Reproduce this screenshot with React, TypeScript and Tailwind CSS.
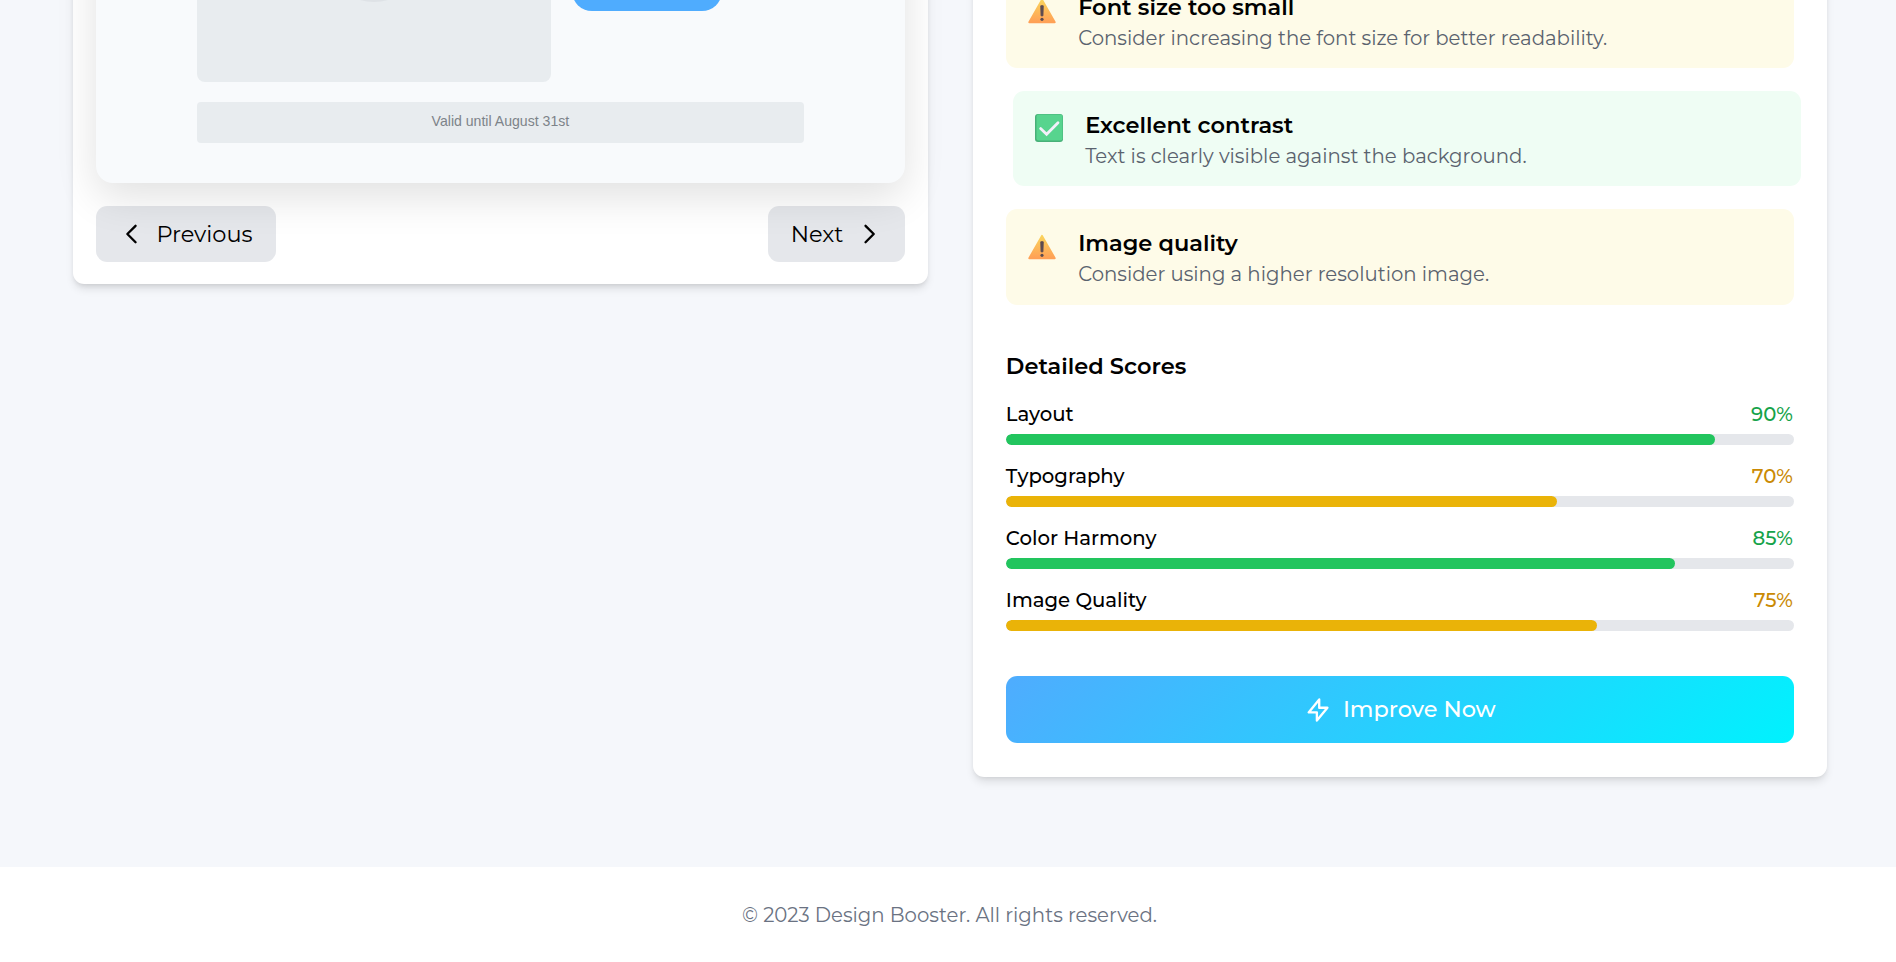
type Tone = "warn" | "good";

const tips: { tone: Tone; title: string; text: string; shifted?: boolean }[] = [
  { tone: "warn", title: "Font size too small", text: "Consider increasing the font size for better readability." },
  { tone: "good", title: "Excellent contrast", text: "Text is clearly visible against the background.", shifted: true },
  { tone: "warn", title: "Image quality", text: "Consider using a higher resolution image." },
];

const scores: { label: string; value: number; tone: Tone }[] = [
  { label: "Layout", value: 90, tone: "good" },
  { label: "Typography", value: 70, tone: "warn" },
  { label: "Color Harmony", value: 85, tone: "good" },
  { label: "Image Quality", value: 75, tone: "warn" },
];

function WarningIcon() {
  return (
    <svg viewBox="0 0 28 28" className="h-7 w-7">
      <defs>
        <linearGradient id="warn" x1="0" y1="0" x2="0" y2="1">
          <stop offset="0" stopColor="#fad35c" />
          <stop offset="1" stopColor="#ffa056" />
        </linearGradient>
      </defs>
      <path d="M14 3.9 26.7 26.2H1.3Z" fill="url(#warn)" stroke="url(#warn)" strokeWidth="2" strokeLinejoin="round" />
      <path d="M12.8 9.8h2.4l-.3 10h-1.8z" fill="#5c4b50" stroke="#5c4b50" strokeWidth="1" strokeLinejoin="round" />
      <circle cx="14" cy="23.3" r="1.6" fill="#5c4b50" />
    </svg>
  );
}

function CheckIcon() {
  return (
    <svg viewBox="0 0 28 28" className="h-7 w-7">
      <rect width="28" height="28" rx="3" fill="#48b078" />
      <rect x="1.5" y="0.4" width="26" height="26" rx="2.2" fill="#57d48e" />
      <path d="M5.6 14.6 11.6 20.2 23 8.8" fill="none" stroke="#f3f0fa" strokeWidth="2.8" strokeLinecap="round" />
    </svg>
  );
}

function Icon({ d }: { d: string }) {
  return (
    <svg viewBox="0 0 24 24" fill="none" stroke="currentColor" strokeWidth="2" strokeLinecap="round" strokeLinejoin="round" className="h-[28.1px] w-[28.1px]">
      <path d={d} />
    </svg>
  );
}

const cardShadow = "shadow-[0_5.6px_8.4px_-1.4px_rgba(0,0,0,0.1),0_2.8px_5.6px_-2.8px_rgba(0,0,0,0.1)]";

function Preview() {
  return (
    <section className={`flex h-[404.4px] w-[854.6px] flex-col rounded-[11.25px] bg-white p-[22.5px] ${cardShadow}`}>
      <div className="relative flex flex-1 flex-col gap-[20.4px] rounded-[16.9px] bg-[#f8fafc] px-[101.2px] pb-[40.4px] shadow-[0_14px_42px_rgba(0,0,0,0.12)]">
        <div className="flex flex-1 gap-[20.8px]">
          <div className="flex h-full w-[354px] justify-center overflow-hidden rounded-b-[8px] bg-[#e8ecef]">
            <svg viewBox="0 0 100 100" className="mt-[-1px] h-[100px] w-[100px]">
              <circle cx="50" cy="50" r="50" fill="#dee2e6" />
            </svg>
          </div>
          <div className="mt-[68.1px] h-[40.4px] w-[150.6px] rounded-full bg-[#4facfe]" />
        </div>
        <div className="flex h-[40.4px] justify-center rounded-[4px] bg-[#e8ecef] pt-[11px] font-['Liberation_Sans',sans-serif] text-[14.1px] leading-4 text-[#7d8389]">
          Valid until August 31st
        </div>
      </div>
      <div className="mt-[22.5px] flex justify-between text-[22.5px] text-black">
        <button className="flex h-[56.3px] w-[180px] items-center gap-[10.2px] rounded-[11.25px] bg-gray-200 pl-[22.5px]">
          <Icon d="M15 19l-7-7 7-7" />
          <span className="pt-[1.5px]">Previous</span>
        </button>
        <button className="flex h-[56.3px] items-center gap-[11.25px] rounded-[11.25px] bg-gray-200 px-[22.5px]">
          <span className="pt-[1.5px]">Next</span>
          <Icon d="M9 5l7 7-7 7" />
        </button>
      </div>
    </section>
  );
}

function Analysis() {
  return (
    <section className={`flex w-[854.6px] flex-col rounded-[11.25px] bg-white px-[33.75px] pb-[33.75px] pt-[93px] ${cardShadow}`}>
      <ul className="flex flex-col gap-[22.7px]">
        {tips.map((tip) => (
          <li
            key={tip.title}
            className={`flex h-[95.4px] gap-[22.2px] rounded-[11.25px] px-[21.5px] ${tip.tone === "good" ? "bg-[#effdf4]" : "bg-[#fefbe8]"} ${tip.shifted ? "translate-x-[7px]" : ""}`}
          >
            <div className="pt-[22.5px]">{tip.tone === "good" ? <CheckIcon /> : <WarningIcon />}</div>
            <div className="pt-[20px]">
              <h4 className="text-[22.5px] font-semibold leading-7 text-black">{tip.title}</h4>
              <p className="mt-[2.7px] text-[19.7px] leading-7 text-[#5a626e]">{tip.text}</p>
            </div>
          </li>
        ))}
      </ul>
      <h3 className="-ml-[0.6px] mt-[47.5px] text-[22.5px] font-semibold leading-7 text-black">Detailed Scores</h3>
      <div className="mt-[20.4px] flex flex-col gap-[16.9px]">
        {scores.map((score) => (
          <div key={score.label} className="flex flex-col gap-[5.6px]">
            <div className="-ml-[0.6px] mr-[0.6px] flex justify-between text-[19.7px] font-medium leading-[28.1px] text-black">
              <span>{score.label}</span>
              <span className={score.tone === "good" ? "text-[#16a34a]" : "text-[#ca8a04]"}>{score.value}%</span>
            </div>
            <div className="h-[11.25px] overflow-hidden rounded-full bg-gray-200">
              <div className={`h-full rounded-full ${score.tone === "good" ? "bg-[#22c55e]" : "bg-[#eab308]"}`} style={{ width: `${score.value}%` }} />
            </div>
          </div>
        ))}
      </div>
      <button className="mt-[45px] flex h-[67.5px] items-center justify-center gap-[10.5px] rounded-[11.25px] bg-[linear-gradient(135deg,#4facfe_0%,#00f2fe_100%)] text-[22.4px] font-medium text-white">
        <Icon d="M13 10V3L4 14h7v7l9-11h-7z" />
        Improve Now
      </button>
    </section>
  );
}

export default function App() {
  return (
    <div className="flex h-[962px] flex-col overflow-hidden bg-[#f5f7fb] font-['Montserrat','Inter',sans-serif]">
      <main className="mt-[-120px] flex h-[987px] shrink-0 items-start gap-[45px] pl-[73.1px]">
        <Preview />
        <Analysis />
      </main>
      <footer className="flex flex-1 justify-center bg-white pl-[3px] pt-[34px] text-[19.7px] leading-7 text-gray-500">
        © 2023 Design Booster. All rights reserved.
      </footer>
    </div>
  );
}
